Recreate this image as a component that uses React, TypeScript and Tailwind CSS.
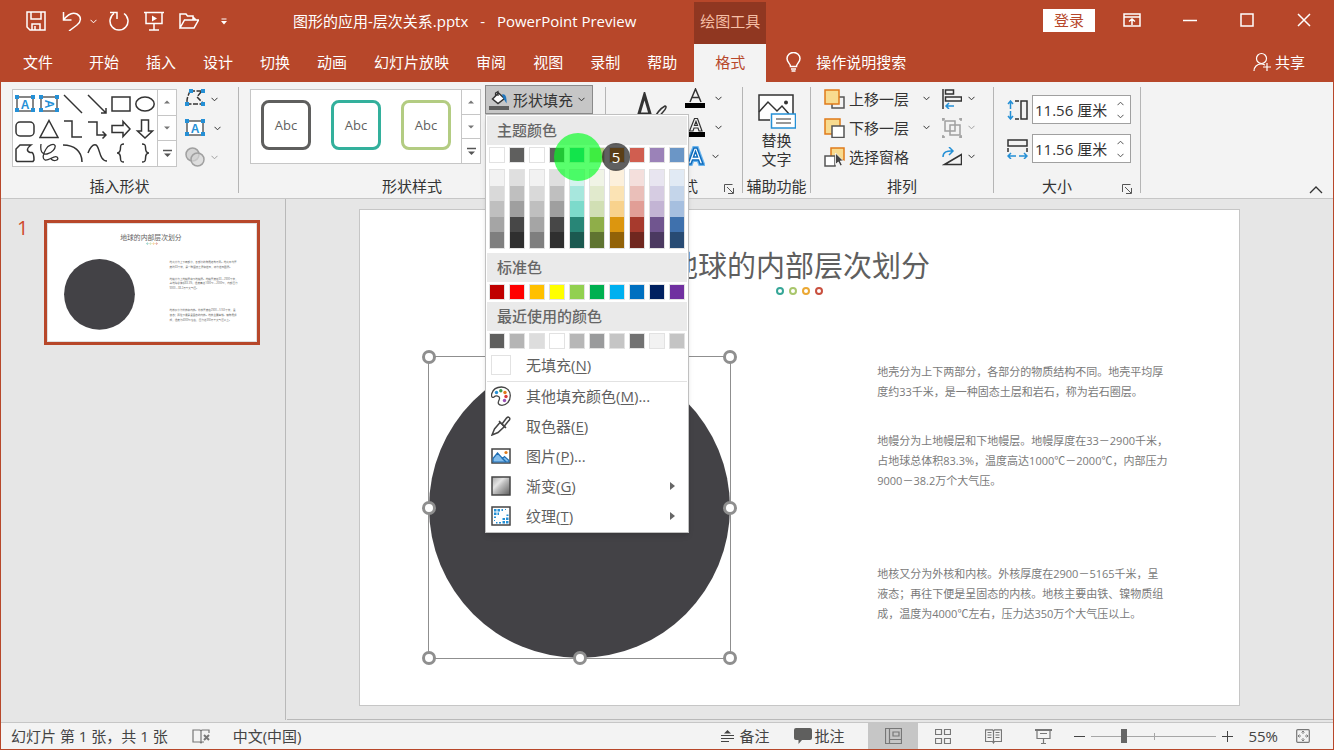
import type { ReactNode } from 'react'
import clsx from 'clsx'

const TABS = ['开始', '插入', '设计', '切换', '动画', '幻灯片放映', '审阅', '视图', '录制', '帮助']

const THEME = ['#ffffff', '#5f5f5e', '#ffffff', '#5f5f5e', '#36b39f', '#b3cc82', '#f0a22e', '#d05e50', '#9b82b8', '#6b96c6']

const SHADES = [
  ['#f2f2f2', '#d9d9d9', '#bfbfbf', '#a5a5a5', '#7f7f7f'],
  ['#dfdfdf', '#bfbfbf', '#9f9f9f', '#474747', '#2f2f2f'],
  ['#f2f2f2', '#d9d9d9', '#bfbfbf', '#a5a5a5', '#7f7f7f'],
  ['#dfdfdf', '#bfbfbf', '#9f9f9f', '#474747', '#2f2f2f'],
  ['#d3f3ee', '#a7e7dd', '#7cdacb', '#288677', '#1b5950'],
  ['#f0f4e6', '#e1eacd', '#d1dfb4', '#8fae49', '#5f7431'],
  ['#fcf0dc', '#fbe3b4', '#f8d28d', '#dc960f', '#926208'],
  ['#f4dfdc', '#eabfb9', '#e19e96', '#a73a2d', '#70271f'],
  ['#e8e5f0', '#d6cce2', '#c3b4d4', '#70558f', '#4b3960'],
  ['#e1eaf4', '#c4d5ea', '#a6bfdf', '#3f71ad', '#284b73'],
]

const STANDARD = ['#c00000', '#ff0000', '#ffc000', '#ffff00', '#92d050', '#00b050', '#00b0f0', '#0070c0', '#002060', '#7030a0']

const RECENT = ['#5f5f5e', '#b5b5b5', '#dddddd', '#ffffff', '#b7b7b7', '#9a9b9c', '#c5c5c5', '#727272', '#f2f2f2', '#c4c4c4']

const PARAGRAPHS = [
  ['地壳分为上下两部分，各部分的物质结构不同。地壳平均厚', '度约33千米，是一种固态土层和岩石，称为岩石圈层。'],
  ['地幔分为上地幔层和下地幔层。地幔厚度在33－2900千米，', '占地球总体积83.3%，温度高达1000℃－2000℃，内部压力', '9000－38.2万个大气压。'],
  ['地核又分为外核和内核。外核厚度在2900－5165千米，呈', '液态；再往下便是呈固态的内核。地核主要由铁、镍物质组', '成，温度为4000℃左右，压力达350万个大气压以上。'],
]

const DOTS = ['#36a697', '#a9c66c', '#eba834', '#c9503f']

interface IconProps {
  w?: number
  h?: number
  className?: string
  children: ReactNode
}

function Icon({ w = 20, h = 20, className, children }: IconProps) {
  return (
    <svg
      width={w}
      height={h}
      viewBox={`0 0 ${w} ${h}`}
      fill="none"
      stroke="currentColor"
      strokeWidth="1.5"
      className={clsx('shrink-0', className)}
      aria-hidden="true"
    >
      {children}
    </svg>
  )
}

function Chevron({ className }: { className?: string }) {
  return (
    <Icon w={7} h={5} className={className}>
      <path d="M.5 .8 3.500 3.800 6.500 .8" strokeWidth="1" />
    </Icon>
  )
}

function Launcher({ label }: { label: string }) {
  return (
    <button aria-label={label} className="text-[#555]">
      <Icon w={10} h={10}>
        <path d="M.5 8V.5H8.500M3 3l6 6M9.500 4v5.500H4" strokeWidth="1" />
      </Icon>
    </button>
  )
}

/* Text frame with four blue grips */
function TextFrame({ vertical = false }: { vertical?: boolean }) {
  return (
    <Icon>
      <rect x="2" y="3" width="16" height="14" stroke="#5f5f5f" fill="#fff" />
      <g fill="#2590d6" stroke="none">
        <rect y="1" width="4" height="4" />
        <rect x="16" y="1" width="4" height="4" />
        <rect y="14" width="4" height="4" />
        <rect x="16" y="14" width="4" height="4" />
        <text
          x="10"
          y="14.500"
          textAnchor="middle"
          fontSize="12"
          fontWeight="700"
          fontFamily="Liberation Sans, sans-serif"
          transform={vertical ? 'rotate(90 10 10)' : undefined}
        >
          A
        </text>
      </g>
    </Icon>
  )
}

const SHAPES: { name: string; icon: ReactNode }[] = [
  { name: '文本框', icon: <TextFrame /> },
  { name: '竖排文本框', icon: <TextFrame vertical /> },
  { name: '直线', icon: <Icon><path d="M1 1 19 19" /></Icon> },
  { name: '箭头', icon: <Icon><path d="M1 1 19 19M19 14v5h-5" /></Icon> },
  { name: '矩形', icon: <Icon><rect x="1" y="3" width="18" height="14" /></Icon> },
  { name: '椭圆', icon: <Icon><ellipse cx="10" cy="10" rx="9.200" ry="7" /></Icon> },
  { name: '圆角矩形', icon: <Icon><rect x="1" y="3" width="18" height="14" rx="4" /></Icon> },
  { name: '三角形', icon: <Icon><path d="M10 1.500 19 18.500H1z" /></Icon> },
  { name: '肘形连接符', icon: <Icon><path d="M1 2h8v16h10" /></Icon> },
  { name: '肘形箭头', icon: <Icon><path d="M1 3h9v13h9M15.500 12.500 19 16l-3.500 3.500" /></Icon> },
  { name: '右箭头', icon: <Icon><path d="M1 6.500h11V2.500l7 7.500-7 7.500v-4H1z" /></Icon> },
  { name: '下箭头', icon: <Icon><path d="M6.500 1v11H2.500l7.500 7 7.500-7h-4V1z" /></Icon> },
  { name: '任意多边形', icon: <Icon><path d="M5 2h11c-4 3-5 6-1 7.500h2c2 1 2 4 2 7.500l-1 1.500H2l-1-1V6z" /></Icon> },
  {
    name: '曲线',
    icon: (
      <Icon>
        <path d="M2 1C1 8 3 12 8 11c5-1 9-6 8-8.500C15 0 9 2 7 6c-3 5-4 10-1 11 4 1 9-5 12-3 3 3-3 5-6 2" strokeWidth="1.300" />
      </Icon>
    ),
  },
  { name: '弧形', icon: <Icon><path d="M0 2c11 0 19 6 19 17" /></Icon> },
  { name: '自由曲线', icon: <Icon><path d="M1 10c2-5 5-9 8-8 4 2 3 16 11 16" /></Icon> },
  { name: '左大括号', icon: <Icon><path d="M13 1c-3 0-3.500 1-3.500 3.500 0 3-.5 5.500-3.500 5.500 3 0 3.500 2.500 3.500 5.500 0 2.500.5 3.500 3.500 3.500" /></Icon> },
  { name: '右大括号', icon: <Icon><path d="M7 1c3 0 3.500 1 3.500 3.500 0 3 .5 5.500 3.500 5.500-3 0-3.500 2.500-3.500 5.500 0 2.500-.5 3.500-3.500 3.500" /></Icon> },
]

function GalleryScroll() {
  return (
    <div className="flex flex-col w-[19px] border-l border-[#c6c6c6] divide-y divide-[#c6c6c6] text-[#777]">
      <button aria-label="上一行" className="flex-1 flex items-center justify-center">
        <Icon w={6} h={4}><path d="M0 3.500 3 .5l3 3z" fill="currentColor" stroke="none" /></Icon>
      </button>
      <button aria-label="下一行" className="flex-1 flex items-center justify-center">
        <Icon w={6} h={4}><path d="M0 .5 3 3.500l3-3z" fill="currentColor" stroke="none" /></Icon>
      </button>
      <button aria-label="其他" className="flex-1 flex items-center justify-center text-[#555]">
        <Icon w={9} h={9}>
          <path d="M0 1.500h9" />
          <path d="M1 4.500 4.500 8 8 4.500z" fill="currentColor" stroke="none" />
        </Icon>
      </button>
    </div>
  )
}

interface GroupProps {
  label: string
  className?: string
  labelClassName?: string
  launcher?: boolean
  children: ReactNode
}

function Group({ label, className, labelClassName, launcher = false, children }: GroupProps) {
  return (
    <>
      <section className="flex flex-col" aria-label={label}>
        <div className={clsx('flex h-[94px] items-start', className)}>{children}</div>
        <div className="relative">
          <div className={clsx('text-center whitespace-nowrap leading-5', labelClassName)}>{label}</div>
          {launcher && (
            <div className="absolute right-2 top-2 flex">
              <Launcher label={`${label}选项`} />
            </div>
          )}
        </div>
      </section>
      <div className="w-px shrink-0 my-[5px] bg-[#b5b5b5]" />
    </>
  )
}

function Swatches({ colors }: { colors: string[] }) {
  return (
    <div className="flex gap-1 px-0.5 py-0.5">
      {colors.map((color, i) => (
        <button
          key={i}
          aria-label={color}
          className="w-4 h-4 border border-[#e2e2e2]"
          style={{ backgroundColor: color }}
        />
      ))}
    </div>
  )
}

function MenuHeading({ children }: { children: ReactNode }) {
  return <h3 className="h-[29px] px-2.5 leading-7 font-medium text-[#666] bg-[#eaeaea]">{children}</h3>
}

interface MenuItemProps {
  icon: ReactNode
  label: string
  accel: string
  tail?: string
  arrow?: boolean
}

function MenuItem({ icon, label, accel, tail = '', arrow = false }: MenuItemProps) {
  return (
    <button role="menuitem" className="flex items-center w-full h-[30px] pl-1 pr-3 gap-[15px] text-left text-[#5f5f5f]">
      {icon}
      <span className="flex-1 whitespace-nowrap">
        {label}(<u className="underline-offset-2">{accel}</u>){tail}
      </span>
      {arrow && (
        <Icon w={5} h={8}><path d="M0 0v8l5-4z" fill="#666" stroke="none" /></Icon>
      )}
    </button>
  )
}

function FillMenu() {
  return (
    <div role="menu" className="absolute left-0 top-full z-50 w-[204px] p-px bg-white border border-[#c0c0c0] shadow-md">
      <MenuHeading>主题颜色</MenuHeading>
      <Swatches colors={THEME} />
      <div className="flex gap-1 px-0.5 pt-1 pb-1">
        {SHADES.map((shades, i) => (
          <div key={i} className="flex flex-col w-4 h-20 border border-[#e2e2e2]">
            {shades.map(shade => (
              <button key={shade} aria-label={shade} className="flex-1" style={{ backgroundColor: shade }} />
            ))}
          </div>
        ))}
      </div>
      <MenuHeading>标准色</MenuHeading>
      <Swatches colors={STANDARD} />
      <MenuHeading>最近使用的颜色</MenuHeading>
      <Swatches colors={RECENT} />
      <div className="-mt-px pb-px -mb-px border-b border-[#e2e2e2]">
        <MenuItem icon={<span className="w-5 h-5 shrink-0 border border-[#e2e2e2] bg-white" />} label="无填充" accel="N" />
      </div>
      <div>
        <MenuItem
          label="其他填充颜色"
          accel="M"
          tail="..."
          icon={
            <Icon>
              <path d="M8.500 12.500C9 10 5 9 3 11 1 12.500 0 10 .8 7.500 2 3.500 6 1 10.500 1c5 0 8.800 3.500 8.800 8.500 0 6-4 9.800-8.300 9.800-4 0-4-2.500-3.500-3.800.3-1 .8-1.500 1-3z" stroke="#444" strokeWidth="1.300" />
              <g stroke="none">
                <circle cx="5.500" cy="6.500" r="1.700" fill="#2590d6" />
                <circle cx="9.800" cy="4.800" r="1.700" fill="#3d9b4b" />
                <circle cx="14" cy="6.500" r="1.700" fill="#e07b1a" />
                <circle cx="15" cy="10.500" r="1.700" fill="#d93b3b" />
                <circle cx="13.500" cy="14.500" r="1.700" fill="#9b4fb5" />
              </g>
            </Icon>
          }
        />
        <MenuItem
          label="取色器"
          accel="E"
          icon={
            <Icon>
              <path d="M9 6.500 3.500 13 1 19l6-2.500 6.500-6z" stroke="#444" />
              <path d="M8 5l7 7M11 8l4.500-6c2-2 4 0 3 1.800L13 10.500z" stroke="#444" />
            </Icon>
          }
        />
        <MenuItem
          label="图片"
          accel="P"
          tail="..."
          icon={
            <Icon>
              <rect x="1" y="3" width="18" height="14" fill="#fff" stroke="#444" />
              <path d="M2 12.500 6.500 7l5 5.500 2-2 4.500 4V16H2z" fill="#83bdec" stroke="#1f6fb5" strokeWidth="1.200" />
              <path d="M11 12l4 4" stroke="#1f6fb5" />
              <circle cx="15" cy="6.500" r="1.600" fill="#e07b1a" stroke="none" />
            </Icon>
          }
        />
        <MenuItem
          label="渐变"
          accel="G"
          arrow
          icon={
            <Icon>
              <defs>
                <linearGradient id="gray" x1="0" y1="0" x2="1" y2="1">
                  <stop offset="0" stopColor="#a8a8a8" />
                  <stop offset=".35" stopColor="#e4e4e4" />
                  <stop offset=".5" stopColor="#bdbdbd" />
                  <stop offset="1" stopColor="#5c5c5c" />
                </linearGradient>
              </defs>
              <rect x="1" y="1" width="18" height="18" fill="url(#gray)" stroke="#444" />
            </Icon>
          }
        />
        <MenuItem
          label="纹理"
          accel="T"
          arrow
          icon={
            <Icon>
              <rect x="1" y="1" width="18" height="18" fill="#fff" stroke="#444" />
              <g fill="#2590d6" stroke="none">
                <path d="M3 3h2.500v2.500H3zM6.500 3H9v2.500H6.500zM10.500 3H12v2h-1.500zM14 3h1v1h-1zM3 6.500h2.500V9H3zM6.500 6.500H8V9H6.500zM3 10.500h2v1.500H3zM3 14h1v1H3z" />
                <path d="M15 15h2.500v2.500H15zM11.500 15H14v2.500h-2.500zM8 16h2v1.500H8zM15 11.500h2.500V14H15zM11.500 12H14v2h-2.500zM15.500 8.500h2V10h-2zM5 16h1.500v1.500H5z" />
              </g>
            </Icon>
          }
        />
      </div>

      {/* Pointer halo and key tip over the swatch rows */}
      <span className="absolute left-[68px] top-[18px] w-12 h-12 rounded-full bg-[rgba(0,255,30,0.65)] pointer-events-none" />
      <span className="absolute left-[116px] top-7 w-7 h-7 rounded-full bg-[rgba(10,10,10,0.65)] text-center leading-7 text-white pointer-events-none">
        5
      </span>
    </div>
  )
}

function TitleBar() {
  return (
    <div className="flex items-center h-11 pl-[25px] pb-0.5">
      <div className="flex items-center">
        <button aria-label="保存">
          <Icon>
            <path d="M1 1h18v18H4l-3-3zM5 1v7h10V1M6 19v-6h8v6M9 15v4" />
          </Icon>
        </button>
        <button aria-label="撤消" className="ml-4">
          <Icon>
            <path d="M1.500 1v8h8M1.500 9C6 3 11 1 15 3c5 3 4 8 0 11l-8 6" />
          </Icon>
        </button>
        <button aria-label="撤消选项" className="ml-2">
          <Chevron />
        </button>
        <button aria-label="恢复" className="ml-3">
          <Icon>
            <path d="M8 8V1.500H1M15 2.500a9 9 0 1 1-10 0" />
          </Icon>
        </button>
        <button aria-label="从头开始" className="ml-[15px]">
          <Icon>
            <path d="M0 1.500h20M2 2v10.500h16V2M10 12.500V19M5 19h10" />
            <path d="m8 4.500 5 3-5 3z" fill="currentColor" stroke="none" />
          </Icon>
        </button>
        <button aria-label="打开" className="ml-[15px]">
          <Icon>
            <path d="M1 17V3h6l1.500 2H14v4M1 17l4.500-8H19.500L15 17zM14 6l3 3" />
          </Icon>
        </button>
        <button aria-label="自定义快速访问工具栏" className="ml-[22px]">
          <Icon w={6} h={7}>
            <path d="M.5 1h5" strokeWidth="1" />
            <path d="M0 3h6L3 6.500z" fill="currentColor" stroke="none" />
          </Icon>
        </button>
      </div>
      <h1 className="ml-[66px] whitespace-nowrap">
        图形的应用-层次关系.pptx<span className="mx-2"> - </span>PowerPoint Preview
      </h1>
    </div>
  )
}

function Header() {
  return (
    <header className="flex text-white bg-[#b7472a]">
      <div className="flex flex-col">
        <TitleBar />
        <nav className="flex items-center gap-[27px] h-[38px] pl-[22px] pr-[17px] pb-0.5">
          <button className="mr-[9px]">文件</button>
          {TABS.map(tab => (
            <button key={tab} className="whitespace-nowrap">{tab}</button>
          ))}
        </nav>
      </div>
      <div className="flex flex-col w-[72px] text-center">
        <div className="h-[42px] mt-0.5 leading-[38px] text-[#f6bfa6] bg-[#903721]">绘图工具</div>
        <button aria-current="page" className="h-[38px] pb-0.5 text-[#b7472a] bg-[#f3f3f3]">格式</button>
      </div>
      <div className="flex-1 flex flex-col">
        <div className="flex items-center justify-end h-11 pb-1 pr-[22px]">
          <button className="w-[52px] h-[23px] mr-7 leading-[23px] text-[#b7472a] bg-white">登录</button>
          <button aria-label="功能区显示选项" className="mr-[42px]">
            <Icon w={18} h={14}>
              <path d="M1 1h16v12H1zM1 4h16M9 12V6M6 8.500 9 6l3 2.500" />
            </Icon>
          </button>
          <button aria-label="最小化" className="mr-[43px]">
            <Icon w={14} h={14}><path d="M0 7.500h14" /></Icon>
          </button>
          <button aria-label="最大化" className="mr-[43px]">
            <Icon w={14} h={14}><rect x="1" y="1" width="12" height="12" /></Icon>
          </button>
          <button aria-label="关闭">
            <Icon w={14} h={14}><path d="m1 1 12 12M13 1 1 13" /></Icon>
          </button>
        </div>
        <div className="flex items-center justify-between h-[38px] pl-5 pr-7 pb-0.5">
          <button className="flex items-center gap-[15px]">
            <Icon w={15} h={20}>
              <path d="M4.500 14.500c0-3-3.500-4-3.500-8a6.500 6 0 0 1 13 0c0 4-3.500 5-3.500 8zM5 17h5M5.500 19h4" />
            </Icon>
            操作说明搜索
          </button>
          <button className="flex items-center gap-1">
            <Icon w={18} h={20}>
              <circle cx="8.500" cy="6.500" r="5" strokeWidth="1.200" />
              <path d="M1 19c0-4 3-7 7-7 2 0 3 .5 4 1M14 11v8M10 15h8" strokeWidth="1.200" />
            </Icon>
            共享
          </button>
        </div>
      </div>
    </header>
  )
}

function SizeField({ label, icon }: { label: string; icon: ReactNode }) {
  return (
    <label className="flex items-center gap-1">
      {icon}
      <span className="relative flex">
        <input
          aria-label={label}
          defaultValue="11.56 厘米"
          className="w-[99px] h-[29px] pl-0.5 border border-[#a0a0a0] bg-white text-[#333]"
        />
        <span className="absolute right-[7px] inset-y-0 flex flex-col justify-center gap-2 text-[#555]">
          <Chevron className="rotate-180" />
          <Chevron />
        </span>
      </span>
    </label>
  )
}

function Ribbon() {
  return (
    <div className="relative flex h-[117px] text-[#333] bg-[#f3f3f3] border-b border-[#c6c6c6]">
      <Group label="插入形状" className="pt-[7px] pl-[11px] pr-[17px]">
        <div className="flex h-[78px] bg-white border border-[#c6c6c6]">
          <div className="grid grid-cols-6 pt-0.5 w-36">
            {SHAPES.map(shape => (
              <button key={shape.name} aria-label={shape.name} className="flex items-center justify-center w-6 h-6">
                {shape.icon}
              </button>
            ))}
          </div>
          <GalleryScroll />
        </div>
        <div className="flex flex-col gap-[9px] ml-2">
          <button aria-label="编辑形状" className="flex items-center gap-1.5">
            <Icon>
              <path d="M5 2h13M5 2C3.500 6 1.500 9 2 15h16M16 3l-4 5 6 6" strokeDasharray="5 1.500" />
              <g fill="#2590d6" stroke="none">
                <rect x="4" width="4" height="4" />
                <rect x="16" width="4" height="4" />
                <rect y="13" width="4" height="4" />
                <rect x="16" y="13" width="4" height="4" />
              </g>
            </Icon>
            <Chevron />
          </button>
          <button aria-label="文本框" className="flex items-center gap-[9px]">
            <TextFrame />
            <Chevron />
          </button>
          <button aria-label="合并形状" disabled className="flex items-center gap-1.5 text-[#a0a0a0]">
            <Icon>
              <circle cx="7.500" cy="7.500" r="6.500" fill="#d4d4d4" />
              <circle cx="12.500" cy="12.500" r="6.500" fill="#d4d4d4" fillOpacity=".7" />
            </Icon>
            <Chevron />
          </button>
        </div>
      </Group>

      <Group label="形状样式" className="pl-[11px] pr-3" labelClassName="pr-5">
        <div className="flex h-[75px] mt-[7px] bg-white border border-[#c6c6c6]">
          <div className="flex items-center gap-5 px-2.5 pb-1 text-[13px] text-[#5f5f5f]">
            <button className="w-[50px] h-[50px] border-3 border-[#5f5f5e] rounded-lg">Abc</button>
            <button className="w-[50px] h-[50px] border-3 border-[#33b09c] rounded-lg">Abc</button>
            <button className="w-[50px] h-[50px] border-3 border-[#b3cc82] rounded-lg">Abc</button>
          </div>
          <GalleryScroll />
        </div>
        <div className="relative ml-1 mt-[3px]">
          <button aria-haspopup="menu" aria-expanded="true" className="flex items-center h-[29px] w-[108px] pl-[3px] gap-1 border border-[#8a8a8a] bg-[#c6c6c6] whitespace-nowrap">
            <Icon>
              <path d="m3.500 9 6-6 6 5.500-6.500 5z" fill="#fff" />
              <path d="M9 6V1.500L6.500 3v3" strokeWidth="1.200" />
              <path d="M13 4.500c3-1 5 2 4.500 9l-3-5z" fill="#1f77c0" stroke="none" />
              <rect y="16" width="20" height="4" fill="#5f5f5e" stroke="none" />
            </Icon>
            形状填充
            <Chevron className="ml-px" />
          </button>
          <FillMenu />
        </div>
      </Group>

      <Group label="艺术字样式" className="pl-7 pr-5" labelClassName="pr-[27px]" launcher>
        <button aria-label="快速样式" className="mt-2.5">
          <Icon w={34} h={34}>
            <path d="M2 32 10.500 3 19 32M5 22h12" strokeWidth="3" />
            <path d="M18 30c4-8 9-14 13-16 2 0 1 3-2 6l-7 8z" fill="#f3f3f3" />
          </Icon>
        </button>
        <div className="flex flex-col gap-[9px] ml-[17px] mt-1.5">
          <button aria-label="文本填充" className="flex items-center gap-2.5">
            <Icon>
              <path d="M5 14 10.500 1 16 14M7 9.500h7" />
              <rect y="15" width="20" height="5" fill="#000" stroke="none" />
            </Icon>
            <Chevron />
          </button>
          <button aria-label="文本轮廓" className="flex items-center gap-2.5">
            <Icon>
              <path d="M4.500 14 9.500 1.500h3L17 14h-3l-1-3H9l-1 3zM9.500 8.500h3L11 4.500z" strokeWidth="1.200" />
              <rect y="15" width="20" height="5" fill="#000" stroke="none" />
            </Icon>
            <Chevron />
          </button>
          <button aria-label="文本效果" className="flex items-center gap-[7px]">
            <Icon>
              <path d="M3 18 9 2h3l6 16h-3l-1.500-4h-6L6 18z" fill="#fff" stroke="#6bb5ee" strokeWidth="4" />
              <path d="M3 18 9 2h3l6 16h-3l-1.500-4h-6L6 18zM8.500 11h4l-2-5.500z" fill="#fff" stroke="#0f6cbd" />
            </Icon>
            <Chevron />
          </button>
        </div>
      </Group>

      <Group label="辅助功能" className="justify-center px-1 pt-3">
        <button className="flex flex-col items-center w-[59px] leading-[19px]">
          <Icon w={38} h={35} className="mb-0.5">
            <path d="M12 26H1V1h34v19" fill="#fff" />
            <path d="M1 18 10 8l9 9 5-5 7 8" />
            <circle cx="28" cy="8.500" r="2" fill="currentColor" stroke="none" />
            <rect x="13.500" y="20" width="24" height="14" fill="#fff" stroke="#2590d6" />
            <path d="M18 25h15M18 29h15" strokeWidth="1.200" />
          </Icon>
          <span>替换</span>
          <span>文字</span>
        </button>
      </Group>

      <Group label="排列" className="pt-0.5 pl-[13px] pr-[18px]">
        <div className="flex flex-col">
          <button className="flex items-center h-[29px] gap-1 whitespace-nowrap">
            <Icon w={21}>
              <path d="M14 8h6v11H8v-4" stroke="#555" />
              <rect x="1" y="1" width="14" height="14" fill="#f8db8f" stroke="#e07b1a" />
            </Icon>
            上移一层
            <Chevron className="ml-2.5" />
          </button>
          <button className="flex items-center h-[29px] gap-1 whitespace-nowrap">
            <Icon w={21}>
              <rect x="1" y="1" width="15" height="15" fill="#f8db8f" stroke="#e07b1a" />
              <rect x="8" y="8" width="12" height="11.500" fill="#fff" stroke="#555" />
            </Icon>
            下移一层
            <Chevron className="ml-2.5" />
          </button>
          <button className="flex items-center h-[29px] gap-1 whitespace-nowrap">
            <Icon w={21}>
              <rect x="7" y="1" width="13" height="12" fill="#f8db8f" stroke="#e07b1a" />
              <rect x="1" y="9" width="10" height="10" fill="#fff" stroke="#555" />
              <path d="M11.500 6v11.500l2.800-2.500 2 4 2-1-2-4h3.200z" fill="#444" stroke="#fff" strokeWidth=".8" />
            </Icon>
            选择窗格
          </button>
        </div>
        <div className="flex flex-col ml-3">
          <button aria-label="对齐" className="flex items-center h-[29px] gap-1.5">
            <Icon>
              <path d="M1 0v20M3.500 1h8v4h-8zM3.500 8h16v4h-16z" />
              <path d="M12 17H4M7 14l-3 3 3 3" stroke="#2590d6" />
            </Icon>
            <Chevron />
          </button>
          <button aria-label="组合" disabled className="flex items-center h-[29px] gap-1.5 text-[#a0a0a0]">
            <Icon>
              <path d="M3 3h10v10H3zM8 7h10v10H8z" />
              <path d="M0 1h3M17 1h3M0 19h3M17 19h3M1 0v3M19 0v3M1 17v3M19 17v3" />
            </Icon>
            <Chevron />
          </button>
          <button aria-label="旋转" className="flex items-center h-[29px] gap-1.5">
            <Icon>
              <path d="M2.500 17.500h17V7.500z" />
              <path d="M1 10c0-5 4-6.500 10-6M7 0l4 4-4 4" stroke="#2590d6" />
            </Icon>
            <Chevron />
          </button>
        </div>
      </Group>

      <Group label="大小" className="pt-[13px] pl-[13px] pr-[9px]" labelClassName="pr-5" launcher>
        <div className="flex flex-col gap-2.5">
          <SizeField
            label="形状高度"
            icon={
              <Icon w={21}>
                <path d="M14 1h6v18h-6zM8 1h4M8 19h4" />
                <path d="M3.500 1v8M3.500 11v8M1 4l2.500-3L6 4M1 16l2.500 3L6 16" stroke="#2590d6" />
              </Icon>
            }
          />
          <SizeField
            label="形状宽度"
            icon={
              <Icon w={21}>
                <path d="M1 1h19v6H1zM1 9v4M20 9v4" />
                <path d="M1 17h8M12 17h8M4 14l-3 3 3 3M17 14l3 3-3 3" stroke="#2590d6" />
              </Icon>
            }
          />
        </div>
      </Group>

      <button aria-label="折叠功能区" className="ml-auto self-end mr-[10px] mb-1">
        <Icon w={14} h={8}><path d="m1 7 6-6 6 6" strokeWidth="1.300" /></Icon>
      </button>
    </div>
  )
}

function SlideThumbnail() {
  return (
    <svg viewBox="0 0 881 497" className="block w-full bg-white" fill="#5f5f5f">
      <text x="436" y="68" textAnchor="middle" fontSize="29">地球的内部层次划分</text>
      {DOTS.map((dot, i) => (
        <circle key={dot} cx={421 + i * 13} cy="83" r="3" fill="none" stroke={dot} strokeWidth="2" />
      ))}
      <circle cx="218" cy="298" r="150" fill="#434246" />
      {PARAGRAPHS.map((lines, p) =>
        lines.map((line, i) => (
          <text key={line} x="515" y={[167, 236, 369][p] + i * 20} fontSize="11">{line}</text>
        )),
      )}
    </svg>
  )
}

const HANDLES = [
  'left-0 top-0',
  'left-1/2 top-0',
  'left-full top-0',
  'left-0 top-1/2',
  'left-full top-1/2',
  'left-0 top-full',
  'left-1/2 top-full',
  'left-full top-full',
]

function Slide() {
  return (
    <div className="w-[881px] h-[497px] pt-9 bg-white border border-[#c6c6c6]">
      <h2 className="text-center text-[29px] leading-10 text-[#5f5f5f]">地球的内部层次划分</h2>
      <div className="flex justify-center gap-[5px] mt-px">
        {DOTS.map(dot => (
          <span key={dot} className="w-2 h-2 border-2 rounded-full" style={{ borderColor: dot }} />
        ))}
      </div>
      <div className="flex justify-between mt-[61px] pl-[68px] pr-[71px]">
        <div className="relative w-[303px] h-[303px] border border-[#8f8f8f]">
          <div className="w-full h-full rounded-full bg-[#434246]" />
          {HANDLES.map(pos => (
            <span
              key={pos}
              className={clsx('absolute w-3.5 h-3.5 -ml-[7px] -mt-[7px] rounded-full border-3 border-[#8f8f8f] bg-white', pos)}
            />
          ))}
        </div>
        <div className="pt-1.5 text-[11px] leading-5 text-[#7a7a7a]">
          {PARAGRAPHS.map((lines, i) => (
            <p key={i} className={clsx('whitespace-nowrap', i === 1 && 'mt-[29px]', i === 2 && 'mt-[73px]')}>
              {lines.map(line => (
                <span key={line} className="block">{line}</span>
              ))}
            </p>
          ))}
        </div>
      </div>
    </div>
  )
}

function StatusBar() {
  return (
    <footer className="flex items-center h-[27px] pl-[10px] pr-[23px] text-[#444] bg-[#f3f3f3] border-t border-[#c6c6c6]">
      <span>幻灯片 第 1 张，共 1 张</span>
      <button aria-label="拼写检查" className="ml-6 text-[#777]">
        <Icon w={18} h={15}>
          <path d="M9 2 8 1H1v12h7l1 1 1-1h2M9 2v12M9 2l1-1h7v3" strokeWidth="1.200" />
          <path d="m12 6 5 5M17 6l-5 5" strokeWidth="2" />
        </Icon>
      </button>
      <span className="ml-[23px]">中文(中国)</span>

      <div className="flex items-center h-full ml-auto">
        <button className="flex items-center gap-1">
          <Icon w={15} h={14}>
            <path d="M4 4.500 7.500 1 11 4.500z" fill="currentColor" stroke="none" />
            <path d="M1 6.500h13M1 9.500h13M1 12.500h8" strokeWidth="1.200" />
          </Icon>
          备注
        </button>
        <button className="flex items-center gap-0.5 ml-[25px]">
          <Icon w={18} h={16}>
            <path d="M2 0h14q2 0 2 2v8q0 2-2 2H8l-3.500 4V12H2q-2 0-2-2V2q0-2 2-2z" fill="#5f5f5e" stroke="none" />
          </Icon>
          批注
        </button>
        <div className="flex h-full ml-6 text-[#777]">
          <button aria-label="普通视图" className="flex items-center justify-center w-[50px] bg-[#c6c6c6]">
            <Icon w={17} h={16}>
              <path d="M.5 .5h16v15H.5zM4.500 .5v15M4.500 11.500h12M8 4h6v4H8z" strokeWidth="1.200" />
            </Icon>
          </button>
          <button aria-label="幻灯片浏览" className="flex items-center justify-center w-[50px]">
            <Icon w={16} h={15}>
              <path d="M.5 .5h6v5h-6zM9.500 .5h6v5h-6zM.5 9.500h6v5h-6zM9.500 9.500h6v5h-6z" strokeWidth="1.200" />
            </Icon>
          </button>
          <button aria-label="阅读视图" className="flex items-center justify-center w-[50px]">
            <Icon w={17} h={15}>
              <path d="M8.500 2 7.500 .8H.5v11.700h7l1 1.500 1-1.500h7V.8h-7zM8.500 2v13M2.500 3.500h4M2.500 6h4M2.500 8.500h4M10.500 3.500h4M10.500 6h4M10.500 8.500h4" strokeWidth="1.200" />
            </Icon>
          </button>
          <button aria-label="幻灯片放映" className="flex items-center justify-center w-[50px]">
            <Icon w={17} h={15}>
              <path d="M0 1h17" strokeWidth="2" />
              <path d="M2 2v7.500h13V2M5 4.500h7M8.500 9.500V14M6 14.500h5" strokeWidth="1.200" />
            </Icon>
          </button>
        </div>
        <button aria-label="缩小" className="ml-1.5">
          <Icon w={11} h={11}><path d="M0 5.500h11" strokeWidth="1" /></Icon>
        </button>
        <div className="relative flex items-center mx-1.5">
          <span className="absolute left-1/2 h-[7px] w-px bg-[#a6a6a6]" />
          <input
            type="range"
            aria-label="显示比例"
            min={10}
            max={190}
            defaultValue={55}
            className="relative w-[125px] h-3.5 appearance-none bg-transparent bg-[linear-gradient(#a6a6a6,#a6a6a6)] bg-[length:100%_1px] bg-center bg-no-repeat [&::-webkit-slider-thumb]:appearance-none [&::-webkit-slider-thumb]:w-1.5 [&::-webkit-slider-thumb]:h-3.5 [&::-webkit-slider-thumb]:bg-[#666]"
          />
        </div>
        <button aria-label="放大">
          <Icon w={11} h={11}><path d="M0 5.500h11M5.500 0v11" strokeWidth="1" /></Icon>
        </button>
        <button className="ml-[15px]">55%</button>
        <button aria-label="使幻灯片适应当前窗口" className="ml-[18px] text-[#777]">
          <Icon w={14} h={14}>
            <rect x=".7" y=".7" width="12.600" height="12.600" rx="1" strokeWidth="1.200" />
            <path d="M7 2v3M7 9v3M2 7h3M9 7h3M5.500 3.500 7 2l1.500 1.500M5.500 10.500 7 12l1.500-1.500M3.500 5.500 2 7l1.500 1.500M10.500 5.500 12 7l-1.500 1.500" strokeWidth=".9" />
          </Icon>
        </button>
      </div>
    </footer>
  )
}

export default function App() {
  return (
    <div className="flex flex-col h-screen min-w-[1334px] overflow-hidden border border-t-0 border-[#b7472a] bg-[#e6e6e6] text-[15px] leading-5 font-['Open_Sans','Noto_Sans_CJK_SC',sans-serif]">
      <Header />
      <Ribbon />
      <main className="flex flex-1 min-h-0">
        <aside className="flex items-start w-[285px] shrink-0 pt-[21px] pl-4 mb-0.5 border-r border-[#b9b9b9]">
          <span className="w-[27px] -mt-1 text-xl leading-6 text-[#d04a2c]">1</span>
          <button aria-label="幻灯片 1" className="w-[216px] border-3 border-[#b7472a] p-px bg-[#e0e0e0]">
            <SlideThumbnail />
          </button>
        </aside>
        <section className="flex-1 flex justify-center pt-2.5 pr-[21px] ml-px mb-0.5 border-b border-[#b9b9b9]">
          <Slide />
        </section>
      </main>
      <StatusBar />
    </div>
  )
}
